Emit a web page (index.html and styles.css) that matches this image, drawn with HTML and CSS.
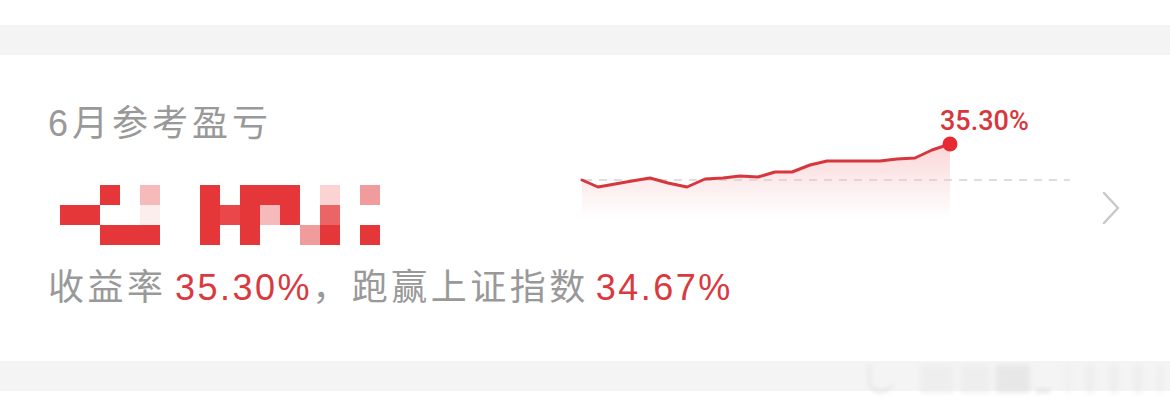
FILE: index.html
```html
<!DOCTYPE html>
<html lang="zh-CN">
<head>
    <meta charset="UTF-8">
    <meta name="viewport" content="width=device-width, initial-scale=1.0">
    <title>6月参考盈亏</title>
    <link rel="stylesheet" href="styles.css">
</head>
<body>
    <div class="top-space"></div>
    <div class="divider"></div>

    <div class="profit-card">
        <div class="summary">
            <div class="summary-title">6月参考盈亏</div>

            <!-- amount is hidden behind a mosaic -->
            <div class="mosaic">
                <i class="c2 r0 red"></i><i class="c4 r0 p1"></i><i class="c7 r0 red"></i>
                <i class="c9 r0 red"></i><i class="c10 r0 red"></i><i class="c11 r0 red"></i>
                <i class="c13 r0 p0"></i><i class="c15 r0 p2"></i>

                <i class="c0 r1 red"></i><i class="c1 r1 red"></i><i class="c4 r1 p00"></i>
                <i class="c7 r1 red"></i><i class="c8 r1 red2"></i><i class="c9 r1 red"></i>
                <i class="c10 r1 p1"></i><i class="c11 r1 red"></i><i class="c13 r1 p3"></i>

                <i class="c2 r2 red"></i><i class="c3 r2 red"></i><i class="c4 r2 red"></i>
                <i class="c7 r2 red"></i><i class="c9 r2 red"></i><i class="c12 r2 p2"></i>
                <i class="c13 r2 red"></i><i class="c15 r2 red"></i>
            </div>

            <div class="summary-rate">
                收益率 <span class="up">35.30%</span>，跑赢上证指数<span class="up index">34.67%</span>
            </div>
        </div>

        <svg class="trend" width="500" height="120" viewBox="0 0 500 120">
            <defs>
                <linearGradient id="trendFill" x1="0" y1="0" x2="0" y2="1">
                    <stop offset="0" stop-color="#e8333a" stop-opacity="0.2"/>
                    <stop offset="1" stop-color="#e8333a" stop-opacity="0"/>
                </linearGradient>
            </defs>
            <polygon fill="url(#trendFill)"
                points="12,80 28,87 45,84 62,81 80,78 98,83 117,87 135,79 153,78 170,76 188,77 205,72 222,72 240,65 257,61 310,61 327,59 345,58 362,50 380,44 380,118 12,118"/>
            <line x1="14" y1="80" x2="500" y2="80" stroke="#d2d2d2" stroke-width="1.5" stroke-dasharray="8 7"/>
            <polyline fill="none" stroke="#d7373c" stroke-width="3" stroke-linejoin="round" stroke-linecap="round"
                points="12,80 28,87 45,84 62,81 80,78 98,83 117,87 135,79 153,78 170,76 188,77 205,72 222,72 240,65 257,61 310,61 327,59 345,58 362,50 380,44"/>
            <circle cx="380" cy="44" r="7.5" fill="#e8292f"/>
            <text class="trend-label" x="370" y="30">35.30%</text>
        </svg>

        <svg class="arrow" width="30" height="40" viewBox="0 0 30 40">
            <polyline points="7,5 21,20 7,35" fill="none" stroke="#c9c9c9" stroke-width="2.5" stroke-linecap="round" stroke-linejoin="round"/>
        </svg>
    </div>

    <div class="divider"></div>

    <div class="watermark">
        <span class="wm-logo"></span>
        <span class="wm-bar w38"></span><span class="wm-bar w33"></span><span class="wm-bar w38 dark"></span>
        <span class="wm-line"></span>
        <span class="wm-bar w4"></span><span class="wm-bar w7"></span><span class="wm-bar w7"></span>
        <span class="wm-bar w7"></span><span class="wm-bar w7"></span><span class="wm-bar w10"></span>
        <span class="wm-bar w7"></span>
    </div>
</body>
</html>
```

FILE: styles.css
```css
body {
    margin: 0;
    padding: 0;
    background-color: #fff;
    font-family: "Liberation Sans", "Noto Sans CJK SC", sans-serif;
    position: relative;
    height: 408px;
    overflow: hidden;
}

.top-space {
    height: 25px;
}

.divider {
    height: 30px;
    background-color: #f4f4f4;
}

.profit-card {
    display: flex;
    height: 306px;
    padding-left: 48px;
    box-sizing: border-box;
}

.summary {
    width: 522px;
    padding-top: 47px;
}

.summary-title {
    font-size: 36px;
    line-height: 44px;
    letter-spacing: 4px;
    color: #999;
}

.mosaic {
    display: grid;
    grid-template-columns: repeat(16, 20px);
    grid-template-rows: repeat(3, 20px);
    margin: 39px 0 0 12px;
}

.mosaic i { display: block; }

.mosaic .r0 { grid-row: 1; }
.mosaic .r1 { grid-row: 2; }
.mosaic .r2 { grid-row: 3; }
.mosaic .c0 { grid-column: 1; }
.mosaic .c1 { grid-column: 2; }
.mosaic .c2 { grid-column: 3; }
.mosaic .c3 { grid-column: 4; }
.mosaic .c4 { grid-column: 5; }
.mosaic .c7 { grid-column: 8; }
.mosaic .c8 { grid-column: 9; }
.mosaic .c9 { grid-column: 10; }
.mosaic .c10 { grid-column: 11; }
.mosaic .c11 { grid-column: 12; }
.mosaic .c12 { grid-column: 13; }
.mosaic .c13 { grid-column: 14; }
.mosaic .c15 { grid-column: 16; }

.mosaic .red { background-color: #e5363a; }
.mosaic .red2 { background-color: #e94749; }
.mosaic .p00 { background-color: #fdeeee; }
.mosaic .p0 { background-color: #fbd3d3; }
.mosaic .p1 { background-color: #f6baba; }
.mosaic .p2 { background-color: #f09c9c; }
.mosaic .p3 { background-color: #ec6566; }

.summary-rate {
    margin-top: 21px;
    font-size: 36px;
    line-height: 44px;
    letter-spacing: 3.5px;
    word-spacing: -5px;
    color: #999;
    white-space: nowrap;
}

.summary-rate .up {
    color: #d93a3f;
    letter-spacing: 2.5px;
}

.summary-rate .index {
    margin-left: 7px;
}

.trend {
    display: block;
    margin-top: 45px;
}

.trend-label {
    font-family: Roboto, sans-serif;
    font-size: 27px;
    font-weight: 500;
    fill: #d7373c;
}

.arrow {
    display: block;
    align-self: center;
    margin: 0 0 0 27px;
}

/* faded stamp in the lower right corner */
.watermark {
    position: absolute;
    left: 868px;
    right: 8px;
    top: 361px;
    display: flex;
    align-items: flex-end;
    gap: 6px;
    height: 32px;
    overflow: hidden;
    filter: blur(2px);
    opacity: 0.7;
}

.wm-logo {
    flex: none;
    width: 26px;
    height: 28px;
    border-radius: 0 0 14px 14px;
    border-bottom: 3px solid #d8d8d8;
    border-left: 3px solid #e2e2e2;
    box-sizing: border-box;
    margin-right: 20px;
}

.wm-bar {
    flex: none;
    height: 28px;
    background-color: #ececec;
    border-radius: 3px;
}

.wm-bar.dark { background-color: #e2e2e2; }
.wm-bar.w4 { width: 4px; }
.wm-bar.w7 { width: 8px; margin-left: 10px; }
.wm-bar.w10 { width: 12px; margin-left: 10px; }
.wm-bar.w33 { width: 30px; }
.wm-bar.w38 { width: 34px; }

.wm-line {
    flex: none;
    width: 14px;
    height: 4px;
    background-color: #dadada;
    margin-right: 10px;
}
```
